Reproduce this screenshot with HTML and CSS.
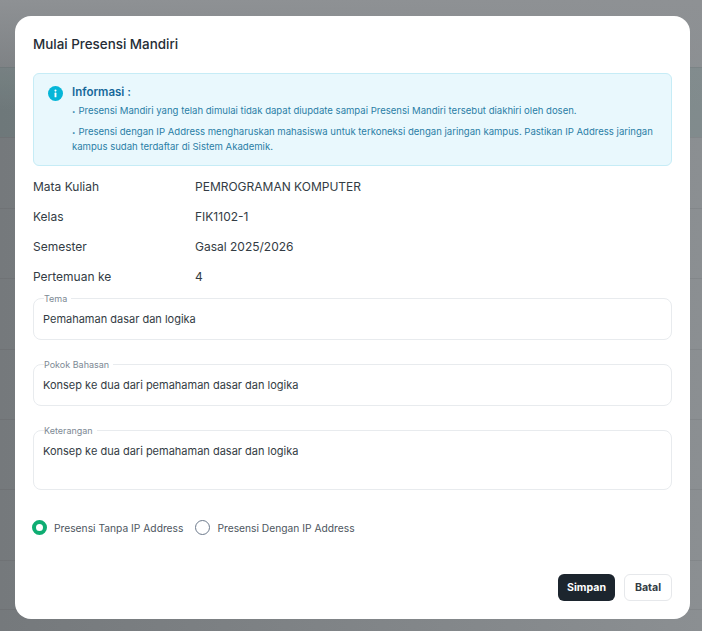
FILE: index.html
```html
<!DOCTYPE html>
<html lang="id">
<head>
<meta charset="utf-8">
<title>Mulai Presensi Mandiri</title>
<link rel="stylesheet" href="styles.css">
</head>
<body>
<div class="backdrop">
  <div class="page-row head"></div>
  <div class="page-row"></div>
  <div class="page-row"></div>
  <div class="page-row"></div>
  <div class="page-row"></div>
  <div class="page-row"></div>
  <div class="page-row"></div>
  <div class="page-row short"></div>
  <div class="page-row end"></div>
</div>
<main class="modal">
  <h1 class="title">Mulai Presensi Mandiri</h1>
  <section class="info">
    <svg class="info-icon" viewBox="0 0 16 16" width="15" height="15"><circle cx="8" cy="8" r="8" fill="#06b6d8"/><rect x="7" y="7" width="2" height="5" rx=".6" fill="#fff"/><circle cx="8" cy="4.9" r="1.1" fill="#fff"/></svg>
    <div class="info-body">
      <h2 class="info-title">Informasi :</h2>
      <p class="info-text first">Presensi Mandiri yang telah dimulai tidak dapat diupdate sampai Presensi Mandiri tersebut diakhiri oleh dosen.</p>
      <p class="info-text">Presensi dengan IP Address mengharuskan mahasiswa untuk terkoneksi dengan jaringan kampus. Pastikan IP Address jaringan kampus sudah terdaftar di Sistem Akademik.</p>
    </div>
  </section>
  <dl class="facts">
    <div class="fact"><dt>Mata Kuliah</dt><dd>PEMROGRAMAN KOMPUTER</dd></div>
    <div class="fact"><dt>Kelas</dt><dd>FIK1102-1</dd></div>
    <div class="fact"><dt>Semester</dt><dd>Gasal 2025/2026</dd></div>
    <div class="fact"><dt>Pertemuan ke</dt><dd>4</dd></div>
  </dl>
  <fieldset class="field"><legend>Tema</legend><div class="value">Pemahaman dasar dan logika</div></fieldset>
  <fieldset class="field"><legend>Pokok Bahasan</legend><div class="value">Konsep ke dua dari pemahaman dasar dan logika</div></fieldset>
  <fieldset class="field tall"><legend>Keterangan</legend><div class="value">Konsep ke dua dari pemahaman dasar dan logika</div></fieldset>
  <div class="radios">
    <label class="radio"><span class="dot on"></span>Presensi Tanpa IP Address</label>
    <label class="radio"><span class="dot"></span>Presensi Dengan IP Address</label>
  </div>
  <div class="actions">
    <button class="btn primary">Simpan</button>
    <button class="btn ghost">Batal</button>
  </div>
</main>
</body>
</html>
```
FILE: styles.css
```css
* { box-sizing: border-box; }
html, body { margin: 0; height: 631px; overflow: hidden; }
body {
  position: relative;
  padding: 16px 12px 12px 15px;
  background:
    linear-gradient(to bottom, #8e9194 0, rgba(142, 145, 148, 0) 110px),
    linear-gradient(to right, #75797c 0, #8b8f92 100%);
  font-family: Inter, "Liberation Sans", sans-serif;
  color: #1c252e;
}
.backdrop { position: absolute; inset: 0; overflow: hidden; display: flex; flex-direction: column; padding-top: 67px; }
.page-row { flex: none; height: 70.4px; border-top: 1px solid rgba(0, 0, 0, .05); }
.page-row.short { height: 49px; }
.page-row.end { height: 21px; }
.page-row.head { background: rgba(70, 120, 110, .14); }
.modal {
  position: relative;
  width: 675px;
  height: 603px;
  padding: 18px 18px 0;
  background: #fff;
  border-radius: 16px;
}
.title { margin: 0; font-size: 13.4px; line-height: 20px; font-weight: 500; color: #252d36; }
.info {
  display: flex;
  gap: 9px;
  height: 93px;
  margin-top: 19px;
  padding: 11px 14px;
  background: #e9f8fd;
  border: 1px solid #c6ecf6;
  border-radius: 6px;
  color: #2a7ea6;
}
.info-icon { flex: none; margin-top: 1px; }
.info-title { margin: 0; font-size: 11.5px; line-height: 15px; font-weight: 600; color: #17689a; }
.info-text { margin: 6px 0 0; font-size: 9.55px; line-height: 15px; }
.info-text.first { margin-top: 3px; }
.info-text::before { content: "•"; margin-right: 3px; font-size: 6px; line-height: 6px; }
.facts { margin: 5px 0 0; }
.fact { display: flex; height: 30px; align-items: center; font-size: 12px; }
.fact dt { width: 162px; color: #333c44; }
.fact dd { margin: 0; color: #333c44; }
.field {
  margin: 0 0 20px;
  min-width: 0;
  height: 46px;
  padding: 0 9px;
  border: 1px solid #e8ebee;
  border-radius: 8px;
}
.facts + .field { margin-top: 3px; }
.field.tall { height: 64px; }
.field legend { padding: 0 4px 0 0; margin-left: 1px; font-size: 9px; line-height: 9px; color: #7d8994; }
.value { padding-top: 8px; font-size: 11px; line-height: 16px; color: #333c44; }
.radios { display: flex; align-items: center; gap: 13px; margin-top: 30px; font-size: 10.25px; color: #4d5660; }
.radio { display: flex; align-items: center; gap: 7px; }
.dot { width: 15px; height: 15px; border-radius: 50%; border: 1px solid #6d7a8c; background: #fff; margin-left: -1px; }
.dot.on { border: 4.5px solid #0ead72; }
.actions { display: flex; justify-content: flex-end; gap: 9px; margin-top: 39px; }
.btn { height: 27px; border-radius: 6px; font: 700 10.6px Inter, "Liberation Sans", sans-serif; }
.primary { width: 57px; background: #1c252e; border: 0; color: #fff; }
.ghost { width: 48px; background: #fff; border: 1px solid #e6e8eb; color: #333c44; }
```
